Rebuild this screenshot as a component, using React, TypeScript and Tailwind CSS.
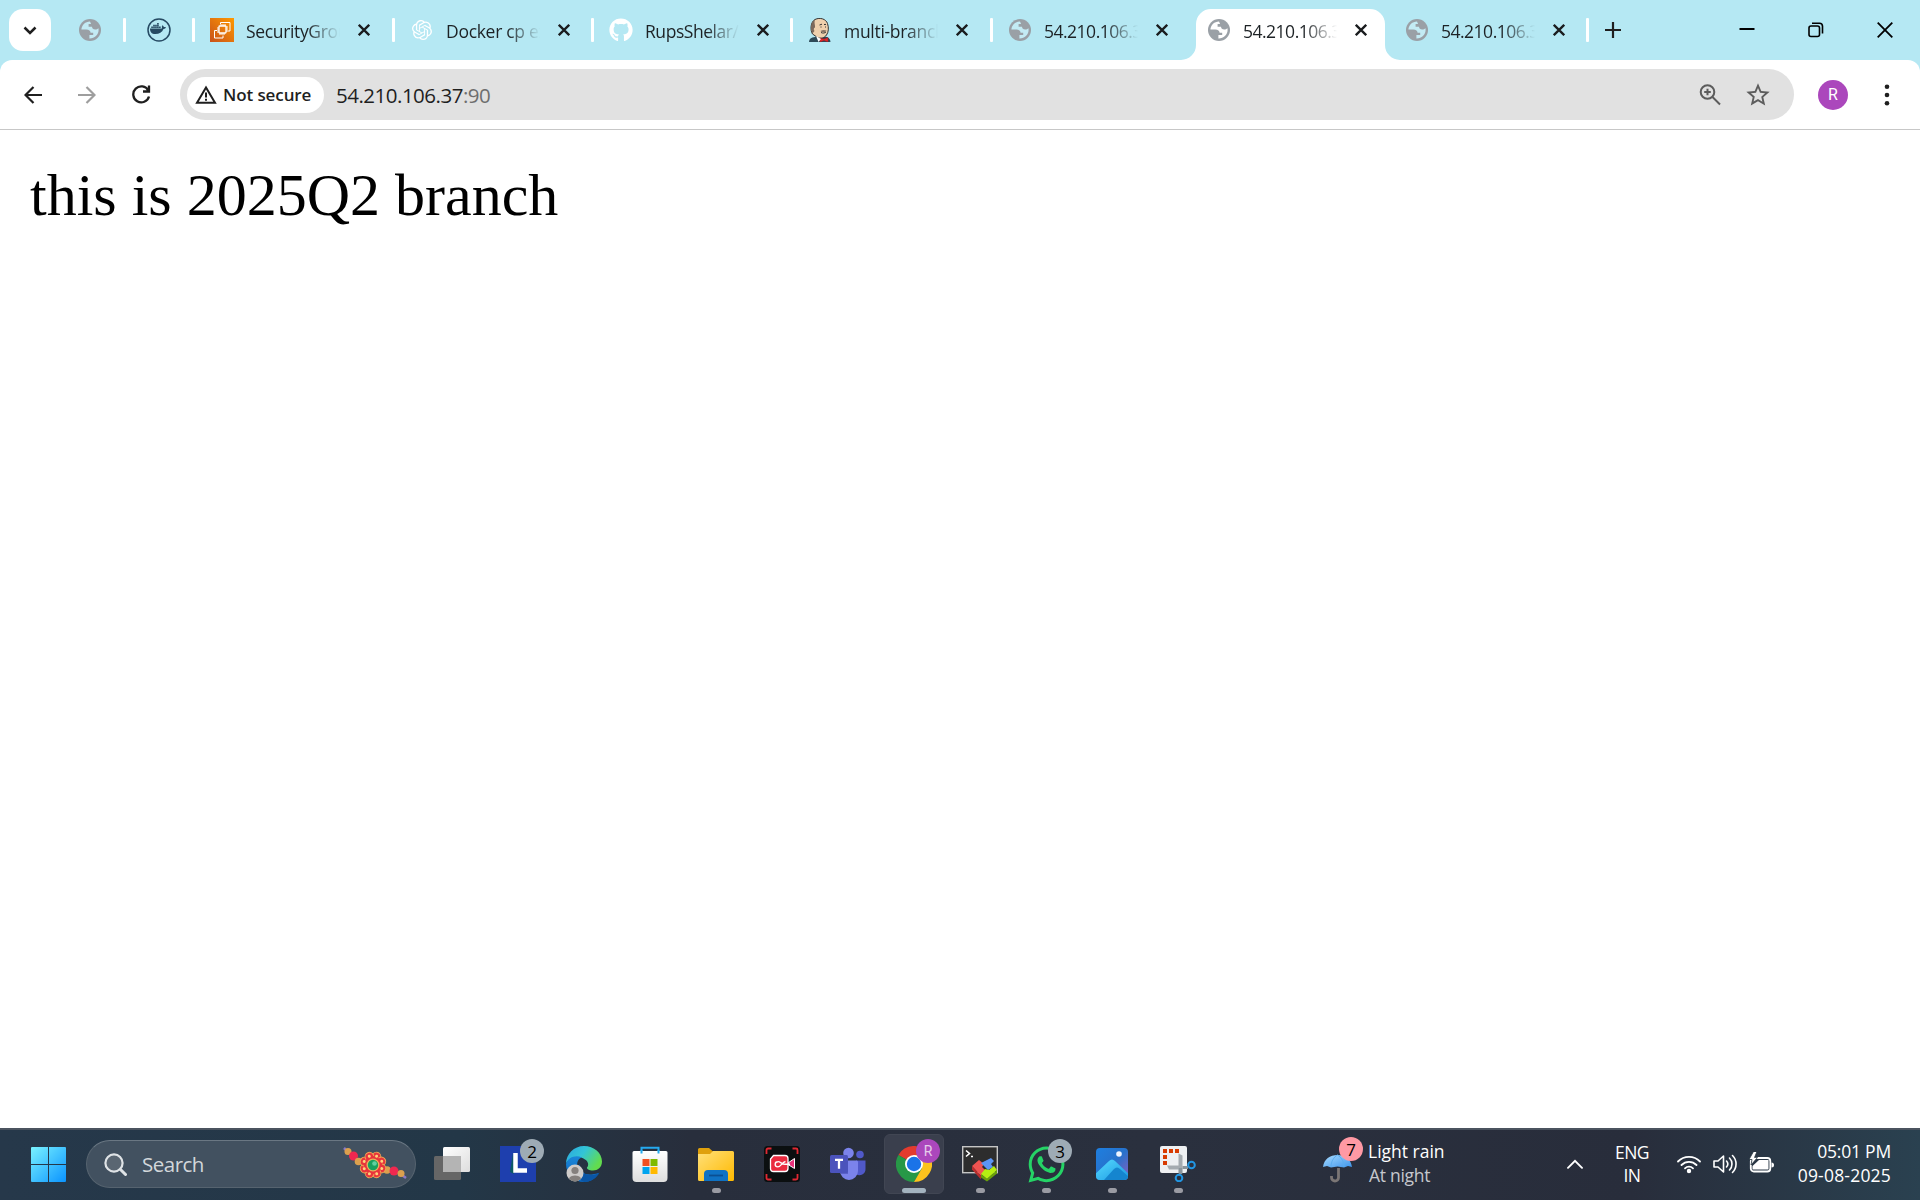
import React from "react";
import { FaDocker, FaGithub, FaWhatsapp } from "react-icons/fa";
import { SiOpenai } from "react-icons/si";
import { MdStarBorder } from "react-icons/md";

const Globe = () => (
  <svg width="24" height="24" viewBox="0 0 24 24" className="block">
    <circle cx="12" cy="12" r="11" fill="#9aa0a6" />
    <path d="M12 3.4C7.4 3.4 3.7 7 3.4 11.4h4.8c2.8 0 4.4 1.3 4.4 3.4h2.6v2.3h-3.8v3.4c5 .2 9.200-3.600 9.200-8.500 0-.7 0-1.200-.2-1.700-.9.9-1.900 1.300-3.200 1.300-2 0-3-1-3.200-2.800h-3.400V5.900h2.500z" fill="currentColor" />
  </svg>
);

const Jenkins = () => (
  <svg width="24" height="24" viewBox="0 0 24 24" className="block">
    <path d="M1 24c0-3 2-4.500 6-5l8 0c4-.6 7 .6 7.500 5z" fill="#2d4a58" />
    <path d="M4.500 16C2 12 2.500 4 7 1.500c5-2.500 11-.5 12.500 4 1.500 4 1 9-1 11.500-2 3-6 4-9 2.500z" fill="#efd0ad" stroke="#333" strokeWidth="1" />
    <path d="M4.500 15.500C2 11 2.500 4.500 7 1.500 5.800 5 7.500 7 7 9.500 5.500 9.500 5.500 12 6.500 13z" fill="#7d695b" />
    <path d="M11.500 7l2.500-.8M16 6.500l2-.1M12.500 9h1M17 9h1M13 14.500c2 1 4 .5 5-.5" stroke="#333" fill="none" />
    <path d="M12.500 13c2-1.500 4.500-1.200 6-.5l-1 1.500h-4z" fill="#8a7464" />
    <path d="M12 20l4 1 4-1.500V24l-4-1.500-4 1.500z" fill="#e02a2a" stroke="#812" strokeWidth=".4" />
    <path d="M8 18l5 3-2.500 3z" fill="#fff" />
  </svg>
);

const Ec2 = () => (
  <svg width="24" height="24" viewBox="0 0 24 24" className="block">
    <defs><linearGradient id="ec2" x1="0" y1="1" x2="1" y2="0"><stop stopColor="#c8511b" /><stop offset="1" stopColor="#f90" /></linearGradient></defs>
    <path fill="url(#ec2)" d="M0 0h24v24H0z" />
    <g fill="none" stroke="#fff" strokeWidth="1"><rect x="9" y="8" width="7" height="7" rx=".8" strokeWidth="1.300" /><path d="M11 6v2M13 6v2M15 6v2M10 15v2M12 15v2M14 15v2M7 10h2M7 12h2M7 14h2M16 9h2M16 11h2M16 13h2M10.500 6V4.500H20V13h-2M7 12.500H4.500V20H13v-2.500" /></g>
  </svg>
);

const CloseX = () => (
  <svg width="12" height="12" viewBox="0 0 12 12" className="block"><path d="M.8.8l10.400 10.400M11.200.8L.8 11.200" stroke="#1a1c1e" strokeWidth="2.300" /></svg>
);

const tabs = [
  { title: "SecurityGroups", icon: <Ec2 />, w: "w-[200px]", tr: "tracking-[-0.35px]" },
  { title: "Docker cp ex", icon: <SiOpenai size={20} className="m-[2px] text-white" />, w: "w-[199px]", tr: "tracking-[-0.3px]" },
  { title: "RupsShelar/m", icon: <FaGithub size={24} className="text-white" />, w: "w-[199px]", tr: "tracking-[-0.45px]" },
  { title: "multi-branch", icon: <Jenkins />, w: "w-[200px]", tr: "tracking-[-0.3px]" },
  { title: "54.210.106.37", icon: <Globe />, w: "w-[199px]", tr: "tracking-[-0.5px]" },
  { title: "54.210.106.37", icon: <Globe />, w: "w-[198px]", tr: "tracking-[-0.5px]", active: true },
  { title: "54.210.106.37", icon: <Globe />, w: "w-[199px]", tr: "tracking-[-0.5px]" },
];

function Tab({ t, sep }: { t: (typeof tabs)[number]; sep: boolean }) {
  return (
    <div className={`relative flex h-[60px] shrink-0 items-center ${t.w} ${t.active ? "text-white" : "text-[#c3ebf4]"}`}>
      {t.active && (
        <svg className="absolute left-[-8px] top-[9px]" width="220" height="51" viewBox="0 0 220 51">
          <path d="M0 51A15 15 0 0 0 15 36V15A15 15 0 0 1 30 0H189A15 15 0 0 1 204 15V36A15 15 0 0 0 219 51z" fill="#fff" />
        </svg>
      )}
      <div className={`h-6 w-[3px] rounded-[1px] ${sep ? "bg-white" : "bg-transparent"}`} />
      <div className="relative ml-[15px] h-6 w-6 text-inherit">
        {t.icon}
      </div>
      <div className={`relative ml-3 mt-0.5 w-[94px] overflow-hidden whitespace-nowrap text-[17.500px] leading-6 text-[#1d2225] [mask-image:linear-gradient(to_right,#000_65%,transparent)] ${t.tr}`}>{t.title}</div>
      <div className="relative ml-[18px]"><CloseX /></div>
    </div>
  );
}

function TabStrip() {
  return (
    <div className="flex h-[60px] items-center bg-[#b5e8f3]">
      <div className="ml-[9px] flex h-[42px] w-[42px] items-center justify-center rounded-[14px] bg-white">
        <svg width="14" height="9" viewBox="0 0 14 9"><path d="M1.500 1.500L7 7l5.500-5.500" fill="none" stroke="#1f1f1f" strokeWidth="2.500" /></svg>
      </div>
      <div className="ml-[27px] text-[#c3ebf4]"><Globe /></div>
      <div className="ml-[21px] h-6 w-[3px] rounded-[1px] bg-white" />
      <svg className="ml-[21px]" width="24" height="24" viewBox="0 0 24 24">
        <circle cx="12" cy="12" r="11" fill="none" stroke="#264a63" strokeWidth="1.500" />
        <FaDocker x="3" y="2.500" width="19" height="19" color="#264a63" />
      </svg>
      <div className="w-[21px]" />
      {tabs.map((t, i) => <Tab key={i} t={t} sep={i < 5} />)}
      <div className="h-6 w-[3px] rounded-[1px] bg-white" />
      <svg className="ml-4" width="16" height="16" viewBox="0 0 16 16"><path d="M8 0v16M0 8h16" stroke="#1f1f1f" strokeWidth="2.200" /></svg>
      <svg className="ml-auto" width="16" height="16" viewBox="0 0 16 16"><path d="M.5 7h15" stroke="#000" strokeWidth="2" /></svg>
      <svg className="ml-[53px]" width="16" height="16" viewBox="0 0 16 16" fill="none" stroke="#000" strokeWidth="1.600"><rect x="1" y="4" width="10.500" height="10.500" rx="2" /><path d="M4 1.200h7.500a3 3 0 0 1 3 3V11.500" /></svg>
      <svg className="ml-[53px] mr-[27px]" width="16" height="16" viewBox="0 0 16 16"><path d="M.7.7l14.600 14.600M15.300.7L.7 15.300" stroke="#000" strokeWidth="1.800" /></svg>
    </div>
  );
}

function Toolbar() {
  return (
    <div className="h-[70px] bg-[#b5e8f3]">
      <div className="flex h-[70px] items-center rounded-t-[12px] border-b border-[#c7c7c7] bg-white">
        <svg className="ml-6" width="18" height="18" viewBox="0 0 18 18" fill="none" stroke="#1f1f1f" strokeWidth="2.200"><path d="M18 9H2M9.500 1L1.500 9l8 8" /></svg>
        <svg className="ml-9" width="18" height="18" viewBox="0 0 18 18" fill="none" stroke="#9e9e9e" strokeWidth="2.200"><path d="M0 9h16M8.500 1l8 8-8 8" /></svg>
        <svg className="ml-9" width="19" height="19" viewBox="0 0 19 19" fill="none" stroke="#1f1f1f" strokeWidth="2.300"><path d="M16.300 5.500A8 8 0 1 0 17 11.500M17 .5v6h-6" /></svg>
        <div className="ml-[29px] flex h-[51px] w-[1614px] items-center rounded-full bg-[#e1e1e1] pl-[7px]">
          <div className="flex h-9 w-[137px] items-center rounded-full bg-white">
            <svg className="ml-2" width="22" height="20" viewBox="0 0 22 20"><path d="M11 2.500L2 17.800h18z" fill="none" stroke="#1f1f1f" strokeWidth="2" /><path d="M11 7.500v5M11 13.700v2" stroke="#1f1f1f" strokeWidth="2" /></svg>
            <span className="ml-[6px] text-[17px] font-semibold leading-6 tracking-[-0.1px] text-[#1f1f1f]">Not secure</span>
          </div>
          <div className="ml-3 whitespace-nowrap text-[20.500px] leading-7 tracking-[-0.500px] text-[#1f1f1f]">54.210.106.37<span className="text-[#6e6e6e]">:90</span></div>
          <svg className="ml-auto" width="22" height="22" viewBox="0 0 22 22" fill="none" stroke="#5c5c5c" strokeWidth="2"><circle cx="8.500" cy="8" r="6.800" /><path d="M13.500 13L21 20.500M8.500 4.700v6.600M5.200 8h6.600" /></svg>
          <MdStarBorder className="ml-[23px] mr-[22px] text-[#5c5c5c]" size={28} />
        </div>
        <div className="ml-6 flex h-[30px] w-[30px] items-center justify-center rounded-full bg-[#ab47bc] font-[Roboto] text-[16px] text-white">R</div>
        <svg className="ml-9" width="6" height="24" viewBox="0 0 6 24" fill="#1f1f1f"><circle cx="3" cy="3.700" r="2.300" /><circle cx="3" cy="12" r="2.300" /><circle cx="3" cy="20.300" r="2.300" /></svg>
      </div>
    </div>
  );
}

function Rakhi() {
  return (
    <svg width="64" height="32" viewBox="0 0 64 32">
      <path d="M1 1l3 3M59 28l4 3" stroke="#8a78c8" strokeWidth="2.500" />
      <circle cx="5" cy="4.500" r="3.500" fill="#dba04e" /><circle cx="10.500" cy="9" r="4.500" fill="#f0284f" /><circle cx="15.500" cy="14.500" r="3.800" fill="#dba04e" />
      <circle cx="44" cy="23" r="3.800" fill="#dba04e" /><circle cx="51" cy="24" r="4.500" fill="#f0284f" /><circle cx="58" cy="26.500" r="3.500" fill="#dba04e" />
      <g fill="#e8343c" stroke="#efa452" strokeWidth="1">
        {[0, 45, 90, 135, 180, 225, 270, 315].map((a) => <circle key={a} cx="30" cy="9" r="4.400" transform={`rotate(${a + 22} 30 18)`} />)}
      </g>
      <circle cx="30" cy="18" r="9" fill="#e8343c" />
      <g fill="#ffd27a">{[0, 45, 90, 135, 180, 225, 270, 315].map((a) => <circle key={a} cx="30" cy="8.500" r="1.500" transform={`rotate(${a + 22} 30 18)`} />)}</g>
      <circle cx="30" cy="18" r="6.500" fill="#eab35b" /><circle cx="30" cy="18" r="5.200" fill="#18a05e" /><circle cx="31.500" cy="16.500" r="2.300" fill="#5fd0a0" />
    </svg>
  );
}

const TaskView = () => (
  <svg width="36" height="36" viewBox="0 0 36 36"><defs><linearGradient id="tv" x1="0" y1="0" x2="1" y2="1"><stop stopColor="#fff" /><stop offset="1" stopColor="#ddd" /></linearGradient></defs><rect y="10" width="27" height="24" rx="1.500" fill="#666" /><rect x="9" y="1" width="27" height="25" rx="1.500" fill="url(#tv)" /><path d="M9 10h18v16H10.500A1.500 1.500 0 0 1 9 24.500z" fill="#b4b4b4" /></svg>
);
const LApp = () => (
  <div className="flex h-9 w-9 items-center justify-center bg-[#1e3fae]">
    <svg width="36" height="36" viewBox="0 0 36 36"><path d="M13 7l-3 19 4 2z" fill="#0c5a63" /><path d="M15.500 7v17.500H27" fill="none" stroke="#fff" strokeWidth="4.500" /></svg>
  </div>
);
const Edge = () => (
  <svg width="36" height="36" viewBox="0 0 36 36">
    <defs>
      <linearGradient id="e1" x1="0" y1="0" x2="1" y2=".5"><stop stopColor="#2aa5e0" /><stop offset=".5" stopColor="#33c5d6" /><stop offset="1" stopColor="#62dc4e" /></linearGradient>
      <linearGradient id="e2" x1="0" y1="0" x2="0" y2="1"><stop stopColor="#1b86d8" /><stop offset="1" stopColor="#0c68c0" /></linearGradient>
    </defs>
    <path d="M0 18C0 8 8 0 18 0s18 7 18 15.500c0 6-4.500 9-9 9-4 0-6.500-1.500-6-3 2-2 1.500-6-2-8C12 9 3 11 0 18z" fill="url(#e1)" />
    <path d="M0 18c2-7 10-9.500 16-6.500-4 1-5.500 5-4.500 9 1.500 7 10 10 21 6.500C29 33 24 36 18 36 8 36 0 28 0 18z" fill="url(#e2)" />
    <path d="M14 18c-1 6 4 11 11 11 4 0 7-1.500 8.500-2.500C31 32 25 36 18 36c-7-2-9-13-4-18z" fill="#0a55a5" />
    <circle cx="9" cy="27" r="8.500" fill="#cfccca" /><circle cx="9" cy="24.500" r="3.600" fill="#85807d" /><path d="M3 32.500c1-4 11-4 12 0-3 4-9 4-12 0z" fill="#85807d" />
  </svg>
);
const Store = () => (
  <svg width="36" height="36" viewBox="0 0 36 36"><defs><linearGradient id="st" x1="0" y1="0" x2="0" y2="1"><stop stopColor="#fff" /><stop offset="1" stopColor="#dedede" /></linearGradient></defs><path d="M9.500 7V1.800h17V7" fill="none" stroke="#25a9ee" strokeWidth="2" /><path d="M.5 6.500a1.500 1.500 0 0 1 1.500-1.500h32a1.500 1.500 0 0 1 1.500 1.500V32a4 4 0 0 1-4 4h-27a4 4 0 0 1-4-4z" fill="url(#st)" /><path d="M9.500 4v3.500M26.500 4v3.500" stroke="#25a9ee" strokeWidth="2" /><path fill="#f25022" d="M10.500 13h7v7h-7z" /><path fill="#7fba00" d="M18.500 13h7v7h-7z" /><path fill="#00a4ef" d="M10.500 21h7v7h-7z" /><path fill="#ffb900" d="M18.500 21h7v7h-7z" /></svg>
);
const Explorer = () => (
  <svg width="36" height="36" viewBox="0 0 36 36"><defs><linearGradient id="ex" x1="0" y1="0" x2="1" y2="1"><stop stopColor="#ffe07a" /><stop offset="1" stopColor="#ffb900" /></linearGradient></defs><path d="M0 3.500A1.500 1.500 0 0 1 1.500 2H11l4 3.500H20v6H0z" fill="#dfa00c" /><path d="M0 8h12l3-3h19.500A1.500 1.500 0 0 1 36 6.500V33.500A1.500 1.500 0 0 1 34.500 35h-33A1.500 1.500 0 0 1 0 33.500z" fill="url(#ex)" /><path d="M6 35v-7a4 4 0 0 1 4-4h16a4 4 0 0 1 4 4v7z" fill="#0f72c4" /><path d="M11 29.500h14" stroke="#0b4f92" strokeWidth="1.800" /></svg>
);
const Recorder = () => (
  <svg width="36" height="36" viewBox="0 0 36 36"><rect width="36" height="36" rx="3.500" fill="#0b0f10" /><path d="M2.500 8V4a1.500 1.500 0 0 1 1.500-1.500h3.500M28.500 2.500H32A1.500 1.500 0 0 1 33.500 4v4M33.500 28v4a1.500 1.500 0 0 1-1.500 1.500h-3.500M7.500 33.500H4A1.500 1.500 0 0 1 2.500 32v-4" fill="none" stroke="#e02832" strokeWidth="1.800" /><path d="M24 17l6.500-4.500v10L24 18.500z" fill="#e8337c" stroke="#fff" strokeWidth="1" /><path d="M9.500 9.500H21a3 3 0 0 1 3 3v10a3 3 0 0 1-3 3H9.500a3 3 0 0 1-3-3V13z" fill="#ea2b3f" stroke="#fff" strokeWidth="1.300" /><path d="M26 18.300H21c-3 0-5-3-7.200-2.600a2.600 2.600 0 0 0 0 5.200C17 20.900 18 16 21.500 15.500" fill="none" stroke="#fff" strokeWidth="1.400" /></svg>
);
const Teams = () => (
  <svg width="36" height="36" viewBox="0 0 36 36"><circle cx="30" cy="8.500" r="3.800" fill="#5059c9" /><path d="M26 14.500h9.500V23a6 6 0 0 1-9.500 5z" fill="#5059c9" /><circle cx="18.500" cy="7" r="5.300" fill="#7b83eb" /><path d="M10 14.500h16.500a1.500 1.500 0 0 1 1.500 1.500v9a9 9 0 0 1-18 0z" fill="#7b83eb" /><path d="M10 12h8v16h-7z" fill="#5a61c8" /><rect y="9" width="18" height="18" rx="1.500" fill="#4b53bc" /><path d="M5 13.800h8M9 13.800v9" stroke="#fff" strokeWidth="2.300" /></svg>
);
const Chrome = () => (
  <svg width="36" height="36" viewBox="0 0 36 36"><path d="M18 18L2.400 9A18 18 0 0 1 33.600 9z" fill="#e33b2e" /><path d="M18 18L2.400 9A18 18 0 0 0 18 36l8-13.500z" fill="#279847" /><path d="M18 9h15.600A18 18 0 0 1 18 36l7.800-13.500z" fill="#fcc31d" /><circle cx="18" cy="18" r="9" fill="#fff" /><circle cx="18" cy="18" r="7.200" fill="#1a73e8" /></svg>
);
const Moba = () => (
  <svg width="36" height="36" viewBox="0 0 36 36"><rect x=".7" y=".7" width="34.600" height="26" fill="#2d2d2d" stroke="#c5c5c5" strokeWidth="1.400" /><path d="M4 4.500l3.500 3L4 10.500M9 10.500h2" fill="none" stroke="#fff" strokeWidth="1.600" /><path d="M10 20l7-6 5 4-2 3 4 4-5 5z" fill="#ee5350" /><path d="M10 20l9 10v3.500L10 23.500z" fill="#b92d2d" /><path d="M19 17l10-5 3 3-3 3 2 3-5 3z" fill="#5b95f5" /><path d="M19 28l4-5 4 1 5-4 3 4-10 9z" fill="#b5ee12" /><path d="M19 28l6 5 10-9v3.500l-10 8-6-4z" fill="#6ba20a" /></svg>
);
const Photos = () => (
  <svg width="36" height="36" viewBox="0 0 36 36"><defs><linearGradient id="ph" x1="0" y1="0" x2="1" y2="1"><stop stopColor="#1e7fe0" /><stop offset=".5" stopColor="#2772cc" /><stop offset="1" stopColor="#8a5ec0" /></linearGradient><linearGradient id="pm" x1="0" y1="0" x2="1" y2="1"><stop stopColor="#58dcff" /><stop offset="1" stopColor="#1490e0" /></linearGradient><clipPath id="pc"><rect x="2" y="2" width="32" height="32" rx="4" /></clipPath></defs><g clipPath="url(#pc)"><path fill="url(#ph)" d="M2 2h32v32H2z" /><path d="M0 29l15-14c2-2 4-2 6 0l15 14v8H0z" fill="url(#pm)" /><path d="M10 34l10-11c2-2 4-2 6 0l10 9v4H8z" fill="#1585cf" /></g><circle cx="25" cy="8" r="2.800" fill="#edf4ff" /></svg>
);
const Snip = () => (
  <svg width="36" height="36" viewBox="0 0 36 36"><rect width="27" height="27" rx="2" fill="#eef0f2" /><path d="M3 3h4v4H3zM9 3h4v4H9zM15 3h4v4h-4zM3 9h4v4H3zM3 15h4v4H3z" fill="#d83b01" /><path d="M18.500 7.500l4 2V27h-4v-3.500H9L7 19.500h11.500z" fill="#a5abb0" /><path d="M22.500 21.500H28" stroke="#8b949b" strokeWidth="3" /><path d="M20.500 22v6" stroke="#8b949b" strokeWidth="3.500" /><circle cx="31.500" cy="19" r="3.300" fill="none" stroke="#2196e3" strokeWidth="2" /><circle cx="19" cy="32" r="3.300" fill="none" stroke="#2196e3" strokeWidth="2" /></svg>
);

type App = { icon: React.ReactNode; badge?: string; run?: boolean; active?: boolean };
const apps: App[] = [
  { icon: <TaskView /> }, { icon: <LApp />, badge: "2" }, { icon: <Edge /> }, { icon: <Store /> },
  { icon: <Explorer />, run: true }, { icon: <Recorder /> }, { icon: <Teams /> },
  { icon: <Chrome />, badge: "R", active: true }, { icon: <Moba />, run: true },
  { icon: <FaWhatsapp size={41} className="-m-[2.500px] text-[#25d366]" />, badge: "3", run: true },
  { icon: <Photos />, run: true }, { icon: <Snip />, run: true },
];

function TaskApp({ app }: { app: App }) {
  return (
    <div className={`relative mx-[3px] flex h-[60px] w-[60px] items-center justify-center rounded-md border ${app.active ? "border-[#414653] bg-[#3a3f4d]" : "border-transparent"}`}>
      {app.icon}
      {app.badge && (
        <div className={`absolute left-[31px] top-[4px] flex h-6 w-6 items-center justify-center rounded-full leading-none ${app.badge === "R" ? "bg-[#ab47bc] font-[Roboto] text-[14px] text-[#e6cdea]" : "bg-[#9eabb5] text-[17px] text-black"}`}>{app.badge}</div>
      )}
      {(app.run || app.active) && <div className={`absolute bottom-0 h-[5px] rounded-full ${app.active ? "w-6 bg-[#a3b3bf]" : "w-[9px] bg-[#9a9ba3]"}`} />}
    </div>
  );
}

function Taskbar() {
  return (
    <div className="flex h-[72px] items-center border-t-2 border-[#4b535f] bg-[linear-gradient(90deg,#26384a_0%,#233747_24%,#282e3c_36%,#2a303e_60%,#282d3b_85%,#2a4150_100%)] pb-[2px] text-white">
      <svg className="ml-[31px] shrink-0" width="35" height="35" viewBox="0 0 35 35"><defs><linearGradient id="win" x1="0" y1="0" x2="35" y2="35" gradientUnits="userSpaceOnUse"><stop stopColor="#7af3ff" /><stop offset="1" stopColor="#0a93ff" /></linearGradient></defs><path fill="url(#win)" d="M1 0h16v17H0V1a1 1 0 0 1 1-1zM18 0h16a1 1 0 0 1 1 1v16H18zM0 18h17v17H1a1 1 0 0 1-1-1zM18 18h17v16a1 1 0 0 1-1 1H18z" /></svg>
      <div className="ml-5 flex h-12 w-[330px] shrink-0 items-center rounded-full border border-[#56636f] border-t-[#6a7783] bg-[#425160]">
        <svg className="ml-[17px]" width="23" height="23" viewBox="0 0 23 23" fill="none" stroke="#dfe3e6"><circle cx="10" cy="10" r="8.600" strokeWidth="2.200" fill="#5a6672" /><path d="M16.500 16.500l5 5" strokeWidth="3" strokeLinecap="round" /></svg>
        <span className="ml-[15px] text-[20.500px] leading-7 tracking-[-0.500px] text-[#d2d7db]">Search</span>
        <div className="ml-auto mr-2 mt-[-2px]"><Rakhi /></div>
      </div>
      <div className="ml-[3px] flex">{apps.map((a, i) => <TaskApp key={i} app={a} />)}</div>
      <div className="relative ml-[112px] h-12 w-[34px]">
        <svg className="mt-[10px]" width="34" height="34" viewBox="0 0 34 34"><defs><linearGradient id="um" x1="0" y1="0" x2="1" y2="1"><stop stopColor="#a9dcff" /><stop offset="1" stopColor="#3c94ec" /></linearGradient></defs><path d="M14.500 17v9.500a3.500 3.500 0 0 1-7 0V25" transform="translate(1 1)" fill="none" stroke="#7b7675" strokeWidth="2.800" /><path d="M0 17C1 9 7 5 14.500 5S28 9 29 17l-4-1-4 1.500-6.500-1-6.500 1-4-1.500z" fill="url(#um)" /><path d="M8 17c0-6 3-10 6.500-12C18 7 21 11 21 17" fill="none" stroke="#5caef0" /></svg>
        <div className="absolute left-[16px] top-[-3px] flex h-6 w-6 items-center justify-center rounded-full bg-[#ff99a4] text-[17px] leading-none text-black">7</div>
      </div>
      <div className="ml-[11px] mt-[-2px] whitespace-nowrap text-[17.500px] leading-6"><div>Light rain</div><div className="pl-px tracking-[-0.300px] text-[#c6c8cd]">At night</div></div>
      <svg className="ml-auto" width="16" height="10" viewBox="0 0 16 10"><path d="M1 8.800l7-7 7 7" fill="none" stroke="#fff" strokeWidth="1.900" strokeLinecap="round" /></svg>
      <div className="ml-[26px] w-[46px] text-center text-[17.500px] leading-[23px] tracking-[-0.500px]">ENG<br />IN</div>
      <svg className="ml-[22px]" width="24" height="20" viewBox="0 0 24 20" fill="none" stroke="#fff" strokeWidth="1.800" strokeLinecap="round"><path d="M1 7.500a15.500 15.500 0 0 1 22 0M4.500 11a10.600 10.600 0 0 1 15 0M8 14.300a5.700 5.700 0 0 1 8 0" /><circle cx="12" cy="17" r="1.300" fill="#fff" /></svg>
      <svg className="ml-3" width="24" height="20" viewBox="0 0 24 20" fill="none" stroke="#fff" strokeWidth="1.600" strokeLinecap="round" strokeLinejoin="round"><path d="M1 7v6h4l5.500 5V2L5 7zM13.500 7a4.500 4.500 0 0 1 0 6M16.500 4a8.500 8.500 0 0 1 0 12M19.500 1.500a12 12 0 0 1 0 17" /></svg>
      <svg className="ml-3 mt-[-4px]" width="25" height="21" viewBox="0 0 25 21"><rect x="1.800" y="6" width="19.500" height="13.500" rx="3" fill="none" stroke="#fff" strokeWidth="1.800" /><path d="M10 8h9.500v9.500h-16V14zM22.500 10.500a2.300 2.300 0 0 1 0 5z" fill="#fff" /><path d="M4.500-.5L0 7.500h3L2 13l6.500-7.500H5.500L8-.5z" fill="#fff" stroke="#26333f" strokeWidth=".8" /></svg>
      <div className="ml-[22px] mr-[29px] mt-[-2px] w-[95px] whitespace-nowrap text-right text-[17.500px] leading-6"><div className="tracking-[-0.200px]">05:01 PM</div><div className="tracking-[0.200px]">09-08-2025</div></div>
    </div>
  );
}

export default function App() {
  return (
    <div className="flex h-[1200px] w-[1920px] flex-col overflow-hidden bg-white font-['Open_Sans',sans-serif]">
      <TabStrip />
      <Toolbar />
      <main className="flex-1 pl-[30px] pt-[29px]">
        <p className="font-['Liberation_Serif',serif] text-[60px] leading-[72px] text-black">this is 2025Q2 branch</p>
      </main>
      <Taskbar />
    </div>
  );
}
